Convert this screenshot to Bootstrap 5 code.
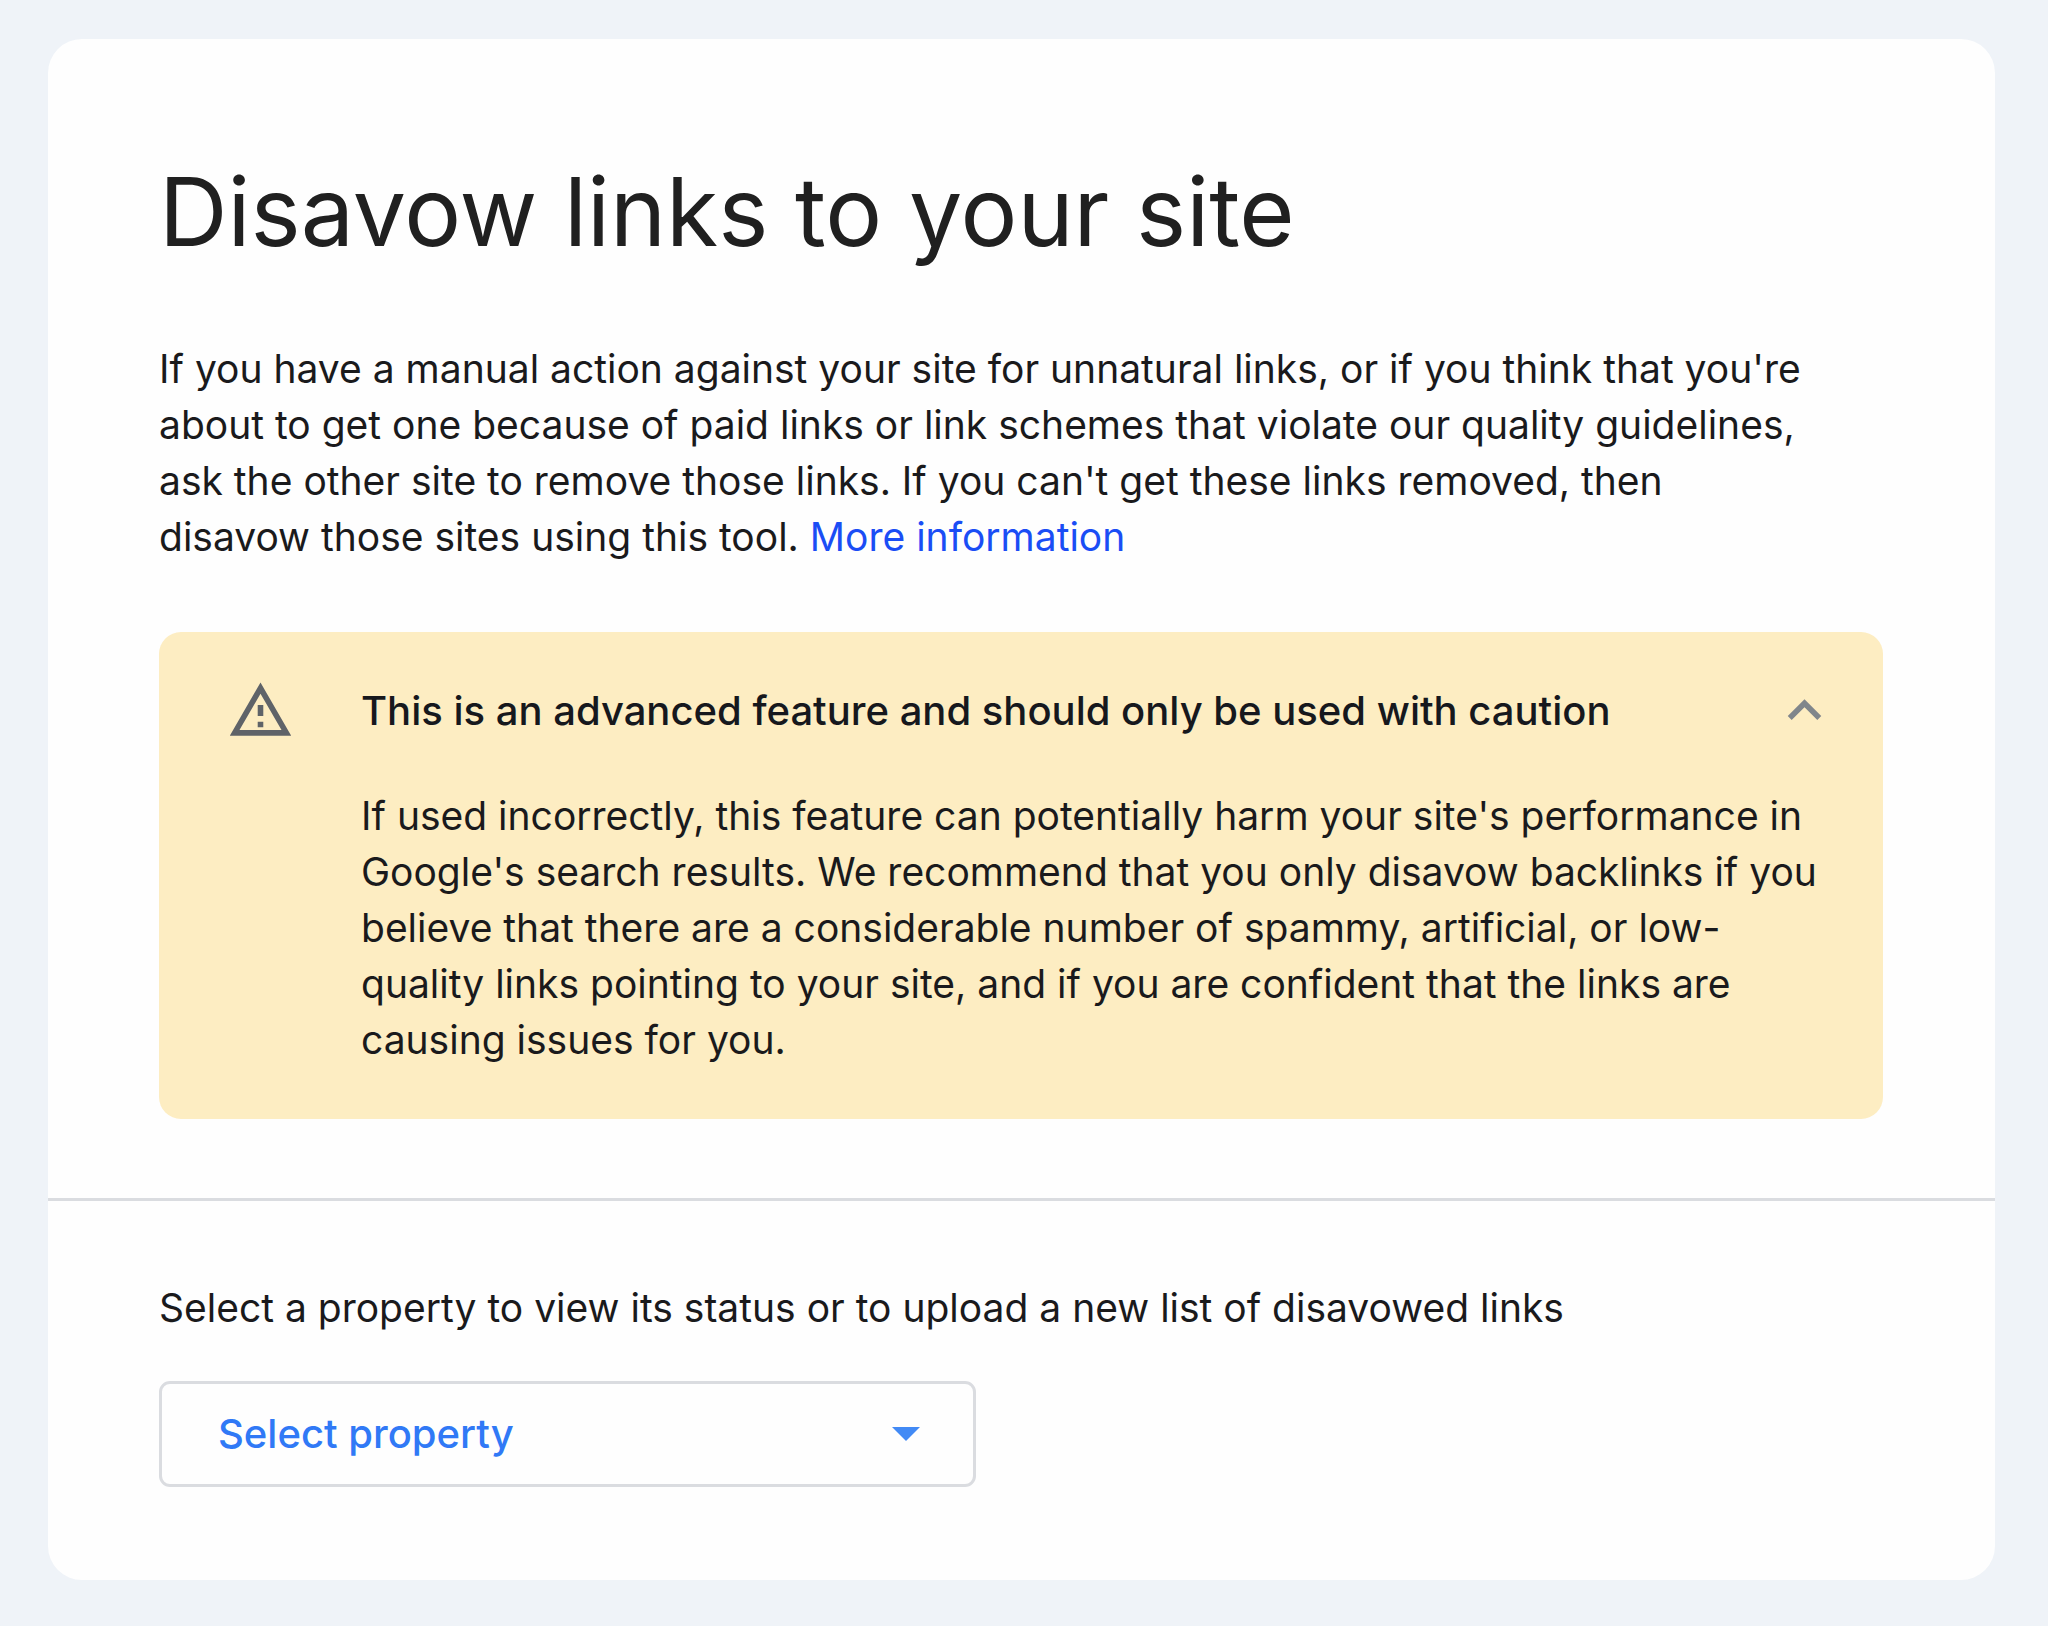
<!DOCTYPE html>
<html lang="en">
<head>
<meta charset="utf-8">
<meta name="viewport" content="width=device-width, initial-scale=1">
<title>Disavow links to your site</title>
<link href="https://cdn.jsdelivr.net/npm/bootstrap@5.3.0/dist/css/bootstrap.min.css" rel="stylesheet">
<style>
  body { background: #eff3f8; color: #1a1a1c; font-family: Inter, "Noto Sans", sans-serif; font-size: 39px; line-height: 56px; }
  .page-wrap { padding: 39px 53px 46px 48px; }
  .tool-card { border-radius: 34px; background: #fefefe; }
  .intro-area { padding: 115px 112px 79px 111px; border-bottom: 3px solid #dadce0; }
  .tool-title { font-size: 95px; line-height: 116px; font-weight: 400; color: #202020; margin-bottom: 71px; }
  .more-link { color: #1a4df5; }
  .caution-box { background: #fdedc2; border-radius: 22px; padding: 45px 45px 51px 68px; margin-top: 67px; }
  .caution-icon, .chevron-icon { width: 67px; height: 67px; }
  .caution-title { font-size: 40px; line-height: 56px; font-weight: 500; color: #16181d; padding-left: 67px; }
  .caution-text { padding: 44px 0 0 134px; }
  .picker-area { padding: 79px 112px 93px 111px; }
  .property-select { width: 817px; max-width: 100%; height: 106px; margin-top: 45px; padding: 0 112px 0 56px; border: 3px solid #dadce0; border-radius: 11px; color: #3079f6; font-size: 40px; font-weight: 500; background-color: #fefefe; background-size: 28px 14px; background-position: right 53px center;
    background-image: url("data:image/svg+xml,%3csvg xmlns='http://www.w3.org/2000/svg' viewBox='0 0 28 14'%3e%3cpath fill='%23428af5' d='M0 0h28L14 14z'/%3e%3c/svg%3e"); }
</style>
</head>
<body>
<main class="page-wrap">
  <div class="tool-card">
    <section class="intro-area">
      <h1 class="tool-title">Disavow links to your site</h1>
      <p class="mb-0">If you have a manual action against your site for unnatural links, or if you think that you're<br>about to get one because of paid links or link schemes that violate our quality guidelines,<br>ask the other site to remove those links. If you can't get these links removed, then<br>disavow those sites using this tool. <a class="more-link text-decoration-none" href="#">More information</a></p>
      <div class="caution-box">
        <div class="d-flex align-items-center">
          <svg class="caution-icon flex-shrink-0" viewBox="0 0 24 24" fill="#5f6368" aria-hidden="true"><path d="M12 5.99 19.53 19H4.47L12 5.99M12 2 1 21h22L12 2zm1 14h-2v2h2v-2zm0-6h-2v4h2v-4z"/></svg>
          <h2 class="caution-title flex-grow-1 mb-0">This is an advanced feature and should only be used with caution</h2>
          <button class="btn p-0 border-0 lh-1 d-flex" type="button" data-bs-toggle="collapse" data-bs-target="#cautionText" aria-expanded="true" aria-controls="cautionText" aria-label="Collapse">
            <svg class="chevron-icon" viewBox="0 0 24 24" fill="#80868b" aria-hidden="true"><path d="m12 8-6 6 1.41 1.41L12 10.83l4.59 4.58L18 14z"/></svg>
          </button>
        </div>
        <div class="collapse show" id="cautionText">
          <p class="caution-text mb-0">If used incorrectly, this feature can potentially harm your site's performance in<br>Google's search results. We recommend that you only disavow backlinks if you<br>believe that there are a considerable number of spammy, artificial, or low-<br>quality links pointing to your site, and if you are confident that the links are<br>causing issues for you.</p>
        </div>
      </div>
    </section>
    <section class="picker-area">
      <label class="d-block" for="property">Select a property to view its status or to upload a new list of disavowed links</label>
      <select class="form-select property-select" id="property">
        <option>Select property</option>
      </select>
    </section>
  </div>
</main>
<script src="https://cdn.jsdelivr.net/npm/bootstrap@5.3.0/dist/js/bootstrap.bundle.min.js"></script>
</body>
</html>
